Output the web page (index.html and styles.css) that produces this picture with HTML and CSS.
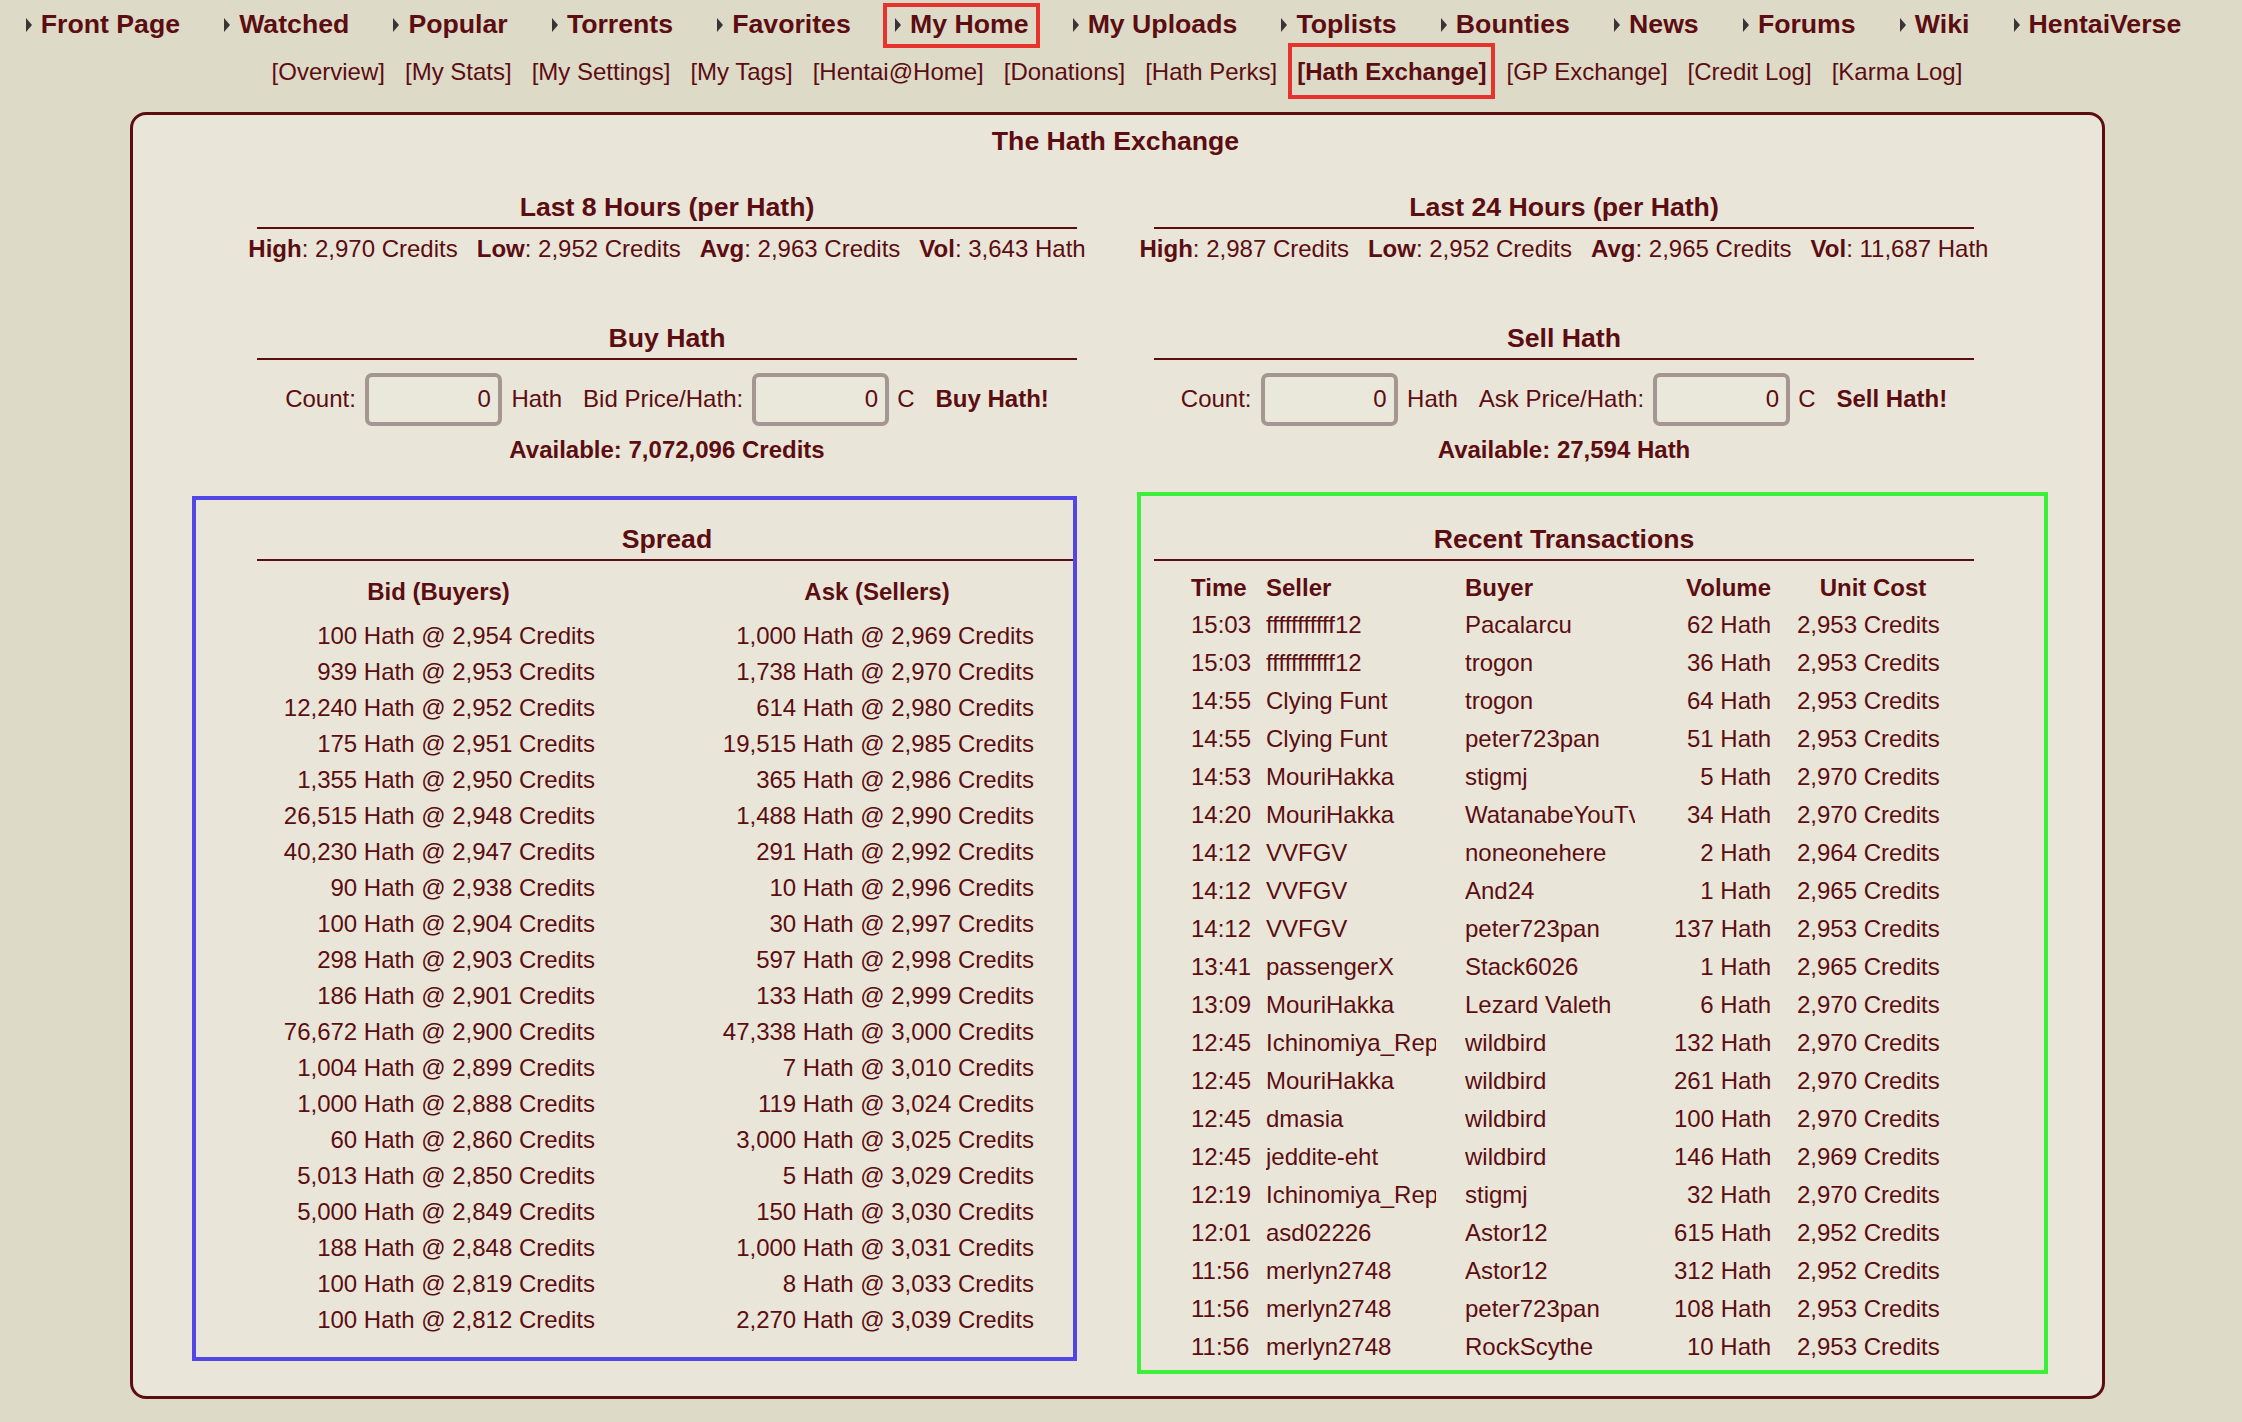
FILE: index.html
```html
<!DOCTYPE html>
<html>
<head>
<meta charset="utf-8">
<title>The Hath Exchange</title>
<link rel="stylesheet" href="styles.css">
</head>
<body>
<nav class="nav">
  <a class="nav-item">Front Page</a>
  <a class="nav-item">Watched</a>
  <a class="nav-item">Popular</a>
  <a class="nav-item">Torrents</a>
  <a class="nav-item">Favorites</a>
  <a class="nav-item mark">My Home</a>
  <a class="nav-item">My Uploads</a>
  <a class="nav-item">Toplists</a>
  <a class="nav-item">Bounties</a>
  <a class="nav-item">News</a>
  <a class="nav-item">Forums</a>
  <a class="nav-item">Wiki</a>
  <a class="nav-item">HentaiVerse</a>
</nav>
<div class="subnav">
  <a>[Overview]</a>
  <a>[My Stats]</a>
  <a>[My Settings]</a>
  <a>[My Tags]</a>
  <a>[Hentai@Home]</a>
  <a>[Donations]</a>
  <a>[Hath Perks]</a>
  <a class="current mark">[Hath Exchange]</a>
  <a>[GP Exchange]</a>
  <a>[Credit Log]</a>
  <a>[Karma Log]</a>
</div>

<div class="box">
  <div class="title">The Hath Exchange</div>
  <div class="grid">
    <section>
      <div class="head">Last 8 Hours (per Hath)</div>
      <div class="stats">
        <span><b>High</b>: 2,970 Credits</span>
        <span><b>Low</b>: 2,952 Credits</span>
        <span><b>Avg</b>: 2,963 Credits</span>
        <span><b>Vol</b>: 3,643 Hath</span>
      </div>
    </section>
    <section>
      <div class="head">Last 24 Hours (per Hath)</div>
      <div class="stats">
        <span><b>High</b>: 2,987 Credits</span>
        <span><b>Low</b>: 2,952 Credits</span>
        <span><b>Avg</b>: 2,965 Credits</span>
        <span><b>Vol</b>: 11,687 Hath</span>
      </div>
    </section>

    <section>
      <div class="head">Buy Hath</div>
      <form class="order">
        <span class="lbl">Count:</span>
        <input class="num" type="text" value="0">
        <span class="unit">Hath</span>
        <span class="lbl">Bid Price/Hath:</span>
        <input class="num" type="text" value="0">
        <span class="unit short">C</span>
        <button class="go" type="button">Buy Hath!</button>
      </form>
      <div class="avail">Available: 7,072,096 Credits</div>
    </section>
    <section>
      <div class="head">Sell Hath</div>
      <form class="order">
        <span class="lbl">Count:</span>
        <input class="num" type="text" value="0">
        <span class="unit">Hath</span>
        <span class="lbl">Ask Price/Hath:</span>
        <input class="num" type="text" value="0">
        <span class="unit short">C</span>
        <button class="go" type="button">Sell Hath!</button>
      </form>
      <div class="avail">Available: 27,594 Hath</div>
    </section>

    <section class="spread">
      <div class="head">Spread</div>
      <div class="spread-grid">
        <div class="sh">Bid (Buyers)</div><div class="sh">Ask (Sellers)</div>
        <div>100 Hath @ 2,954 Credits</div><div>1,000 Hath @ 2,969 Credits</div>
        <div>939 Hath @ 2,953 Credits</div><div>1,738 Hath @ 2,970 Credits</div>
        <div>12,240 Hath @ 2,952 Credits</div><div>614 Hath @ 2,980 Credits</div>
        <div>175 Hath @ 2,951 Credits</div><div>19,515 Hath @ 2,985 Credits</div>
        <div>1,355 Hath @ 2,950 Credits</div><div>365 Hath @ 2,986 Credits</div>
        <div>26,515 Hath @ 2,948 Credits</div><div>1,488 Hath @ 2,990 Credits</div>
        <div>40,230 Hath @ 2,947 Credits</div><div>291 Hath @ 2,992 Credits</div>
        <div>90 Hath @ 2,938 Credits</div><div>10 Hath @ 2,996 Credits</div>
        <div>100 Hath @ 2,904 Credits</div><div>30 Hath @ 2,997 Credits</div>
        <div>298 Hath @ 2,903 Credits</div><div>597 Hath @ 2,998 Credits</div>
        <div>186 Hath @ 2,901 Credits</div><div>133 Hath @ 2,999 Credits</div>
        <div>76,672 Hath @ 2,900 Credits</div><div>47,338 Hath @ 3,000 Credits</div>
        <div>1,004 Hath @ 2,899 Credits</div><div>7 Hath @ 3,010 Credits</div>
        <div>1,000 Hath @ 2,888 Credits</div><div>119 Hath @ 3,024 Credits</div>
        <div>60 Hath @ 2,860 Credits</div><div>3,000 Hath @ 3,025 Credits</div>
        <div>5,013 Hath @ 2,850 Credits</div><div>5 Hath @ 3,029 Credits</div>
        <div>5,000 Hath @ 2,849 Credits</div><div>150 Hath @ 3,030 Credits</div>
        <div>188 Hath @ 2,848 Credits</div><div>1,000 Hath @ 3,031 Credits</div>
        <div>100 Hath @ 2,819 Credits</div><div>8 Hath @ 3,033 Credits</div>
        <div>100 Hath @ 2,812 Credits</div><div>2,270 Hath @ 3,039 Credits</div>
      </div>
    </section>

    <section class="trades">
      <div class="head">Recent Transactions</div>
      <div class="tx">
        <div class="th">Time</div><div class="th">Seller</div><div class="th">Buyer</div><div class="th vol">Volume</div><div class="th cost">Unit Cost</div>

        <div>15:03</div><div class="name">fffffffffff12</div><div class="name">Pacalarcu</div><div class="vol">62 Hath</div><div class="cost">2,953 Credits</div>
        <div>15:03</div><div class="name">fffffffffff12</div><div class="name">trogon</div><div class="vol">36 Hath</div><div class="cost">2,953 Credits</div>
        <div>14:55</div><div class="name">Clying Funt</div><div class="name">trogon</div><div class="vol">64 Hath</div><div class="cost">2,953 Credits</div>
        <div>14:55</div><div class="name">Clying Funt</div><div class="name">peter723pan</div><div class="vol">51 Hath</div><div class="cost">2,953 Credits</div>
        <div>14:53</div><div class="name">MouriHakka</div><div class="name">stigmj</div><div class="vol">5 Hath</div><div class="cost">2,970 Credits</div>
        <div>14:20</div><div class="name">MouriHakka</div><div class="name">WatanabeYouTv</div><div class="vol">34 Hath</div><div class="cost">2,970 Credits</div>
        <div>14:12</div><div class="name">VVFGV</div><div class="name">noneonehere</div><div class="vol">2 Hath</div><div class="cost">2,964 Credits</div>
        <div>14:12</div><div class="name">VVFGV</div><div class="name">And24</div><div class="vol">1 Hath</div><div class="cost">2,965 Credits</div>
        <div>14:12</div><div class="name">VVFGV</div><div class="name">peter723pan</div><div class="vol">137 Hath</div><div class="cost">2,953 Credits</div>
        <div>13:41</div><div class="name">passengerX</div><div class="name">Stack6026</div><div class="vol">1 Hath</div><div class="cost">2,965 Credits</div>
        <div>13:09</div><div class="name">MouriHakka</div><div class="name">Lezard Valeth</div><div class="vol">6 Hath</div><div class="cost">2,970 Credits</div>
        <div>12:45</div><div class="name">Ichinomiya_Rep</div><div class="name">wildbird</div><div class="vol">132 Hath</div><div class="cost">2,970 Credits</div>
        <div>12:45</div><div class="name">MouriHakka</div><div class="name">wildbird</div><div class="vol">261 Hath</div><div class="cost">2,970 Credits</div>
        <div>12:45</div><div class="name">dmasia</div><div class="name">wildbird</div><div class="vol">100 Hath</div><div class="cost">2,970 Credits</div>
        <div>12:45</div><div class="name">jeddite-eht</div><div class="name">wildbird</div><div class="vol">146 Hath</div><div class="cost">2,969 Credits</div>
        <div>12:19</div><div class="name">Ichinomiya_Rep</div><div class="name">stigmj</div><div class="vol">32 Hath</div><div class="cost">2,970 Credits</div>
        <div>12:01</div><div class="name">asd02226</div><div class="name">Astor12</div><div class="vol">615 Hath</div><div class="cost">2,952 Credits</div>
        <div>11:56</div><div class="name">merlyn2748</div><div class="name">Astor12</div><div class="vol">312 Hath</div><div class="cost">2,952 Credits</div>
        <div>11:56</div><div class="name">merlyn2748</div><div class="name">peter723pan</div><div class="vol">108 Hath</div><div class="cost">2,953 Credits</div>
        <div>11:56</div><div class="name">merlyn2748</div><div class="name">RockScythe</div><div class="vol">10 Hath</div><div class="cost">2,953 Credits</div>
      </div>
    </section>
  </div>
</div>
</body>
</html>
```

FILE: styles.css
```css
html, body {
  margin: 0;
}
body {
  padding: 8px 0 23px;
  background: #DDDAC8;
  color: #5C0D11;
  font-family: "Liberation Sans", Arial, sans-serif;
}
a {
  color: #5C0D11;
  text-decoration: none;
}

/* top navigation */
.nav {
  display: flex;
  justify-content: center;
  gap: 44.2px;
  padding-right: 35px;
  font-size: 26.67px;
  font-weight: bold;
  line-height: 32px;
  white-space: nowrap;
}
.nav-item {
  position: relative;
  display: flex;
  align-items: center;
  gap: 9px;
}
.nav-item::before {
  content: "";
  width: 0;
  height: 0;
  margin-top: 1px;
  border-left: 6px solid #3a3434;
  border-top: 7px solid transparent;
  border-bottom: 7px solid transparent;
}
.nav-item.mark::after {
  content: "";
  position: absolute;
  left: -12px;
  right: -12px;
  top: -5px;
  bottom: -8px;
  border: 4px solid #E6332E;
}

.subnav {
  display: flex;
  justify-content: center;
  gap: 20px;
  margin-top: 17.7px;
  padding-right: 8px;
  font-size: 24px;
  line-height: 28px;
  white-space: nowrap;
}
.subnav .current {
  position: relative;
  font-weight: bold;
}
.subnav .current::after {
  content: "";
  position: absolute;
  left: -9px;
  right: -8px;
  top: -14.5px;
  bottom: -13.5px;
  border: 4px solid #E6332E;
}

/* main box */
.box {
  margin: 26.8px 0 0 130px;
  width: 1975px;
  box-sizing: border-box;
  border: 3px solid #5C0D12;
  border-radius: 16px;
  background: #E9E6D9;
  padding: 9.3px 89.5px 30.3px 85.5px;
}
.title {
  text-align: center;
  font-size: 26.67px;
  font-weight: bold;
  line-height: 32px;
}
.grid {
  display: grid;
  grid-template-columns: 897px 897px;
  align-items: start;
  row-gap: 59.1px;
  margin-top: 34.7px;
}
section {
  position: relative;
}
.head {
  width: 820px;
  margin: 0 auto;
  text-align: center;
  font-size: 26.67px;
  font-weight: bold;
  line-height: 32px;
  padding-bottom: 4px;
  border-bottom: 2px solid #5C0D12;
}
.stats {
  display: flex;
  justify-content: center;
  gap: 19px;
  margin-top: 5.5px;
  font-size: 24px;
  line-height: 28px;
  white-space: nowrap;
}

/* order forms */
.order {
  display: flex;
  justify-content: center;
  align-items: center;
  margin: 12.9px 0 0;
  font-size: 24px;
  line-height: 28px;
  white-space: nowrap;
}
.lbl {
  margin-right: 9px;
}
.num {
  width: 137px;
  height: 53px;
  box-sizing: border-box;
  margin: 0 9.5px 0 0;
  padding: 0 7px 0 0;
  border: 4px solid #A59692;
  border-radius: 7px;
  background: #EAE7DB;
  color: #5C0D11;
  font-family: "Liberation Sans", Arial, sans-serif;
  font-size: 24px;
  text-align: right;
}
.unit {
  margin-right: 21px;
}
.unit.short {
  margin-left: -1.5px;
}
.go {
  border: 0;
  padding: 0;
  background: transparent;
  color: #5C0D11;
  font-family: "Liberation Sans", Arial, sans-serif;
  font-size: 24px;
  font-weight: bold;
  line-height: 28px;
}
.avail {
  margin-top: 10px;
  text-align: center;
  font-size: 24px;
  font-weight: bold;
  line-height: 28px;
}

/* spread */
.spread-grid {
  display: grid;
  grid-template-columns: 313px 314px;
  column-gap: 125px;
  margin: 12.6px 0 0 63.5px;
  font-size: 24px;
  line-height: 36px;
  text-align: right;
  white-space: nowrap;
}
.spread-grid .sh {
  text-align: center;
  font-weight: bold;
  margin-bottom: 8.3px;
}
.spread::after {
  content: "";
  position: absolute;
  left: -26.5px;
  right: 38.5px;
  top: -27px;
  bottom: -23px;
  border: 4px solid #5047E6;
  pointer-events: none;
}

/* recent transactions */
.tx {
  display: grid;
  grid-template-columns: 75px 199px 209px 97px 178px;
  margin: 7.6px 0 0 75.5px;
  font-size: 24px;
  line-height: 38px;
  white-space: nowrap;
}
.tx .th {
  font-weight: bold;
  line-height: 37px;
}
.tx .name {
  width: 170px;
  overflow: hidden;
}
.tx .vol {
  text-align: right;
}
.tx .cost {
  padding-left: 26px;
}
.tx .th.cost {
  text-align: center;
}
.trades::after {
  content: "";
  position: absolute;
  left: 21.5px;
  right: -35.5px;
  top: -31px;
  bottom: -8.3px;
  border: 4px solid #3BEF3B;
  pointer-events: none;
}
```
